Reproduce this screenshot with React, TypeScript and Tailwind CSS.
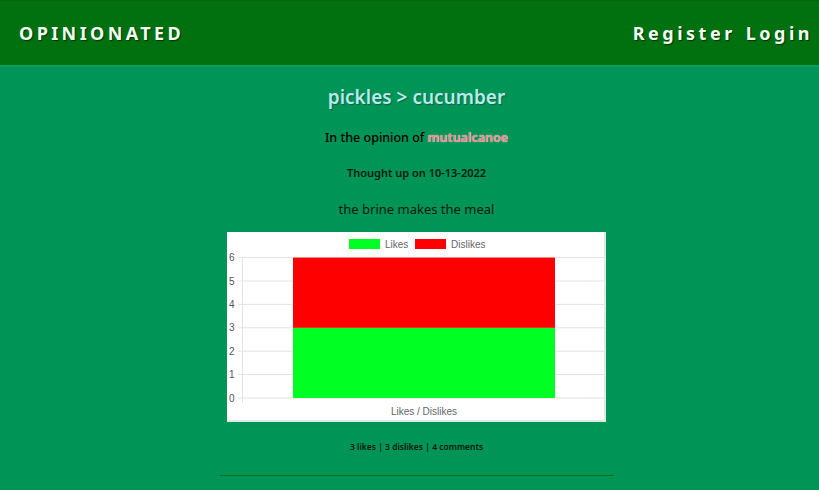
import React from "react";

const ticks = [6, 5, 4, 3, 2, 1, 0];

const VoteChart: React.FC = () => {
    const y0 = 166;
    const step = 23.4;
    return (
        <div className="w-[379px] h-[190px] bg-white border-b-2 border-r-2 border-[#dfe9e2]">
            <svg width="379" height="190" className="block">
                <rect x="122" y="7" width="31" height="10" fill="#00ff22" />
                <text x="158" y="16" fontSize="10" fill="#666" fontFamily="Liberation Sans, Arial, sans-serif">
                    Likes
                </text>
                <rect x="188" y="7" width="31" height="10" fill="#ff0000" />
                <text x="224" y="16" fontSize="10" fill="#666" fontFamily="Liberation Sans, Arial, sans-serif">
                    Dislikes
                </text>
                {ticks.map((t) => {
                    const y = y0 - t * step;
                    return (
                        <g key={t}>
                            <line x1="11" x2="377" y1={y} y2={y} stroke="#e3e3e3" strokeWidth="1" />
                            <text
                                x="2"
                                y={y + 3.5}
                                fontSize="10"
                                fill="#555"
                                fontFamily="Liberation Sans, Arial, sans-serif"
                            >
                                {t}
                            </text>
                        </g>
                    );
                })}
                <line x1="15.5" x2="15.5" y1={y0 - 6 * step} y2={y0 + 5} stroke="#e3e3e3" strokeWidth="1" />
                <rect x="66" y={y0 - 3 * step} width="262" height={3 * step} fill="#00ff22" />
                <rect x="66" y={y0 - 6 * step} width="262" height={3 * step} fill="#ff0000" />
                <text
                    x="197"
                    y="183"
                    fontSize="10"
                    fill="#666"
                    textAnchor="middle"
                    fontFamily="Liberation Sans, Arial, sans-serif"
                >
                    Likes / Dislikes
                </text>
            </svg>
        </div>
    );
};

const App: React.FC = () => {
    return (
        <div
            className="w-[819px] h-[490px] overflow-hidden bg-[#009456] flex flex-col"
            style={{ fontFamily: '"Noto Sans", "Open Sans", sans-serif' }}
        >
            <header className="h-[67px] shrink-0 bg-[#01700f] border-t border-[#046511] border-b-2 border-b-[#03a064] flex flex-row items-center justify-between pl-[19px] pr-[6px]">
                <h1 className="text-[18px] font-bold tracking-[3.4px] text-[#f2fff2] [text-shadow:1px_1px_1px_#003300]">
                    OPINIONATED
                </h1>
                <nav className="flex flex-row gap-[10px] text-[18px] font-bold tracking-[3.5px] text-[#f2fff2] [text-shadow:1px_1px_1px_#003300]">
                    <span>Register</span>
                    <span>Login</span>
                </nav>
            </header>
            <main className="flex flex-col items-center pl-[14px]">
                <h2 className="mt-[16px] text-[19px] font-semibold text-[#b4ecec] [text-shadow:1px_1px_1px_#1b5e44] leading-[28px]">
                    pickles &gt; cucumber
                </h2>
                <p className="mt-[19px] text-[12.5px] font-medium text-black leading-[16px]">
                    In the opinion of{" "}
                    <span className="text-[#f7868e] font-semibold [text-shadow:0_0_1px_#ffffff]">mutualcanoe</span>
                </p>
                <p className="mt-[19px] text-[11px] font-semibold text-[#0b1a0f] leading-[16px]">
                    Thought up on 10-13-2022
                </p>
                <p className="mt-[20px] text-[13px] text-[#0b1a0f] leading-[16px]">the brine makes the meal</p>
                <div className="mt-[15px]">
                    <VoteChart />
                </div>
                <p className="mt-[19px] text-[8.5px] font-semibold text-[#0b1a0f] leading-[12px]">
                    3 likes | 3 dislikes | 4 comments
                </p>
                <div className="mt-[22px] w-[394px] border-t border-[#0b6e1a]" />
            </main>
        </div>
    );
};

export default App;
